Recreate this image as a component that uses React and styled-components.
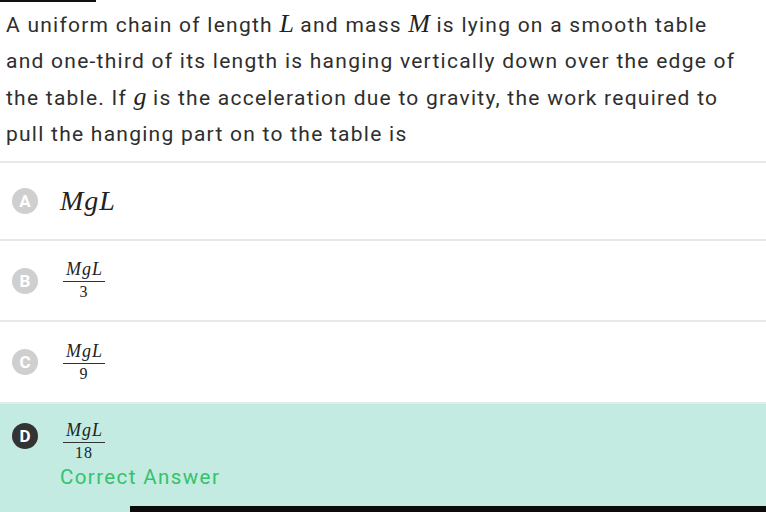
import styled, { createGlobalStyle } from "styled-components";

const Global = createGlobalStyle`
  html, body {
    margin: 0;
    padding: 0;
    background: #fff;
  }
`;

const Page = styled.div`
  width: 766px;
  height: 512px;
  overflow: hidden;
  background: #fff;
  display: flex;
  flex-direction: column;
  font-family: Roboto, "Liberation Sans", sans-serif;
`;

const TopMark = styled.div`
  width: 96px;
  height: 2px;
  background: #111;
`;

const Question = styled.div`
  padding: 4px 0 9px 6px;
  font-size: 21px;
  line-height: 36px;
  color: #2e2e2e;
  letter-spacing: 1.25px;
  white-space: nowrap;
`;

const Line = styled.div``;

const M = styled.span`
  font-family: "Liberation Serif", "DejaVu Serif", serif;
  font-style: italic;
  font-size: ${(p) => p.size || 26}px;
  letter-spacing: ${(p) => p.ls || 0}px;
  color: #222;
`;

const Option = styled.div`
  display: flex;
  align-items: ${(p) => (p.top ? "flex-start" : "center")};
  gap: 22px;
  height: ${(p) => p.h}px;
  padding: ${(p) => (p.top ? "16px" : "0")} 0 0 12px;
  box-sizing: border-box;
  border-top: 2px solid ${(p) => (p.correct ? "#dcefea" : "#e8e8e8")};
  background: ${(p) => (p.correct ? "#c3ebe2" : "#fff")};
`;

const Badge = styled.div`
  flex: none;
  width: 26px;
  height: 26px;
  border-radius: 50%;
  background: ${(p) => (p.dark ? "#333" : "#cfcfcf")};
  color: #fff;
  display: flex;
  align-items: center;
  justify-content: center;
  font-size: 17px;
  font-weight: 700;
  margin-top: ${(p) => p.offset || 0}px;
`;

const Answer = styled.div`
  display: flex;
  flex-direction: column;
  align-items: flex-start;
`;

const Frac = styled.span`
  display: inline-flex;
  flex-direction: column;
  align-items: center;
  font-family: "Liberation Serif", "DejaVu Serif", serif;
  color: #222;
  margin-left: 3px;
`;

const Num = styled.span`
  font-style: italic;
  font-size: 18px;
  letter-spacing: 1px;
  line-height: 20px;
  padding: 0 2px 2px 3px;
  border-bottom: 1.5px solid #333;
`;

const Den = styled.span`
  font-size: 16px;
  letter-spacing: 1px;
  line-height: 20px;
`;

const Correct = styled.div`
  font-size: 20.5px;
  line-height: 24px;
  letter-spacing: 1.4px;
  color: #34c26a;
  margin-top: 2px;
`;

const Footer = styled.div`
  flex: 1;
  display: flex;
`;

const FooterTeal = styled.div`
  width: 130px;
  background: #c3ebe2;
`;

const FooterDark = styled.div`
  flex: 1;
  background: #0c0c0c;
`;

function Fraction({ den }) {
  return (
    <Frac>
      <Num>MgL</Num>
      <Den>{den}</Den>
    </Frac>
  );
}

export default function App() {
  return (
    <Page>
      <Global />
      <TopMark />
      <Question>
        <Line>
          A uniform chain of length <M>L</M> and mass <M>M</M> is lying on a smooth table
        </Line>
        <Line>and one-third of its length is hanging vertically down over the edge of</Line>
        <Line>
          the table. If <M>g</M> is the acceleration due to gravity, the work required to
        </Line>
        <Line>pull the hanging part on to the table is</Line>
      </Question>
      <Option h={78}>
        <Badge>A</Badge>
        <M size={28} ls={1}>MgL</M>
      </Option>
      <Option h={81}>
        <Badge>B</Badge>
        <Fraction den="3" />
      </Option>
      <Option h={82}>
        <Badge>C</Badge>
        <Fraction den="9" />
      </Option>
      <Option h={104} correct top>
        <Badge dark offset={3}>D</Badge>
        <Answer>
          <Fraction den="18" />
          <Correct>Correct Answer</Correct>
        </Answer>
      </Option>
      <Footer>
        <FooterTeal />
        <FooterDark />
      </Footer>
    </Page>
  );
}
